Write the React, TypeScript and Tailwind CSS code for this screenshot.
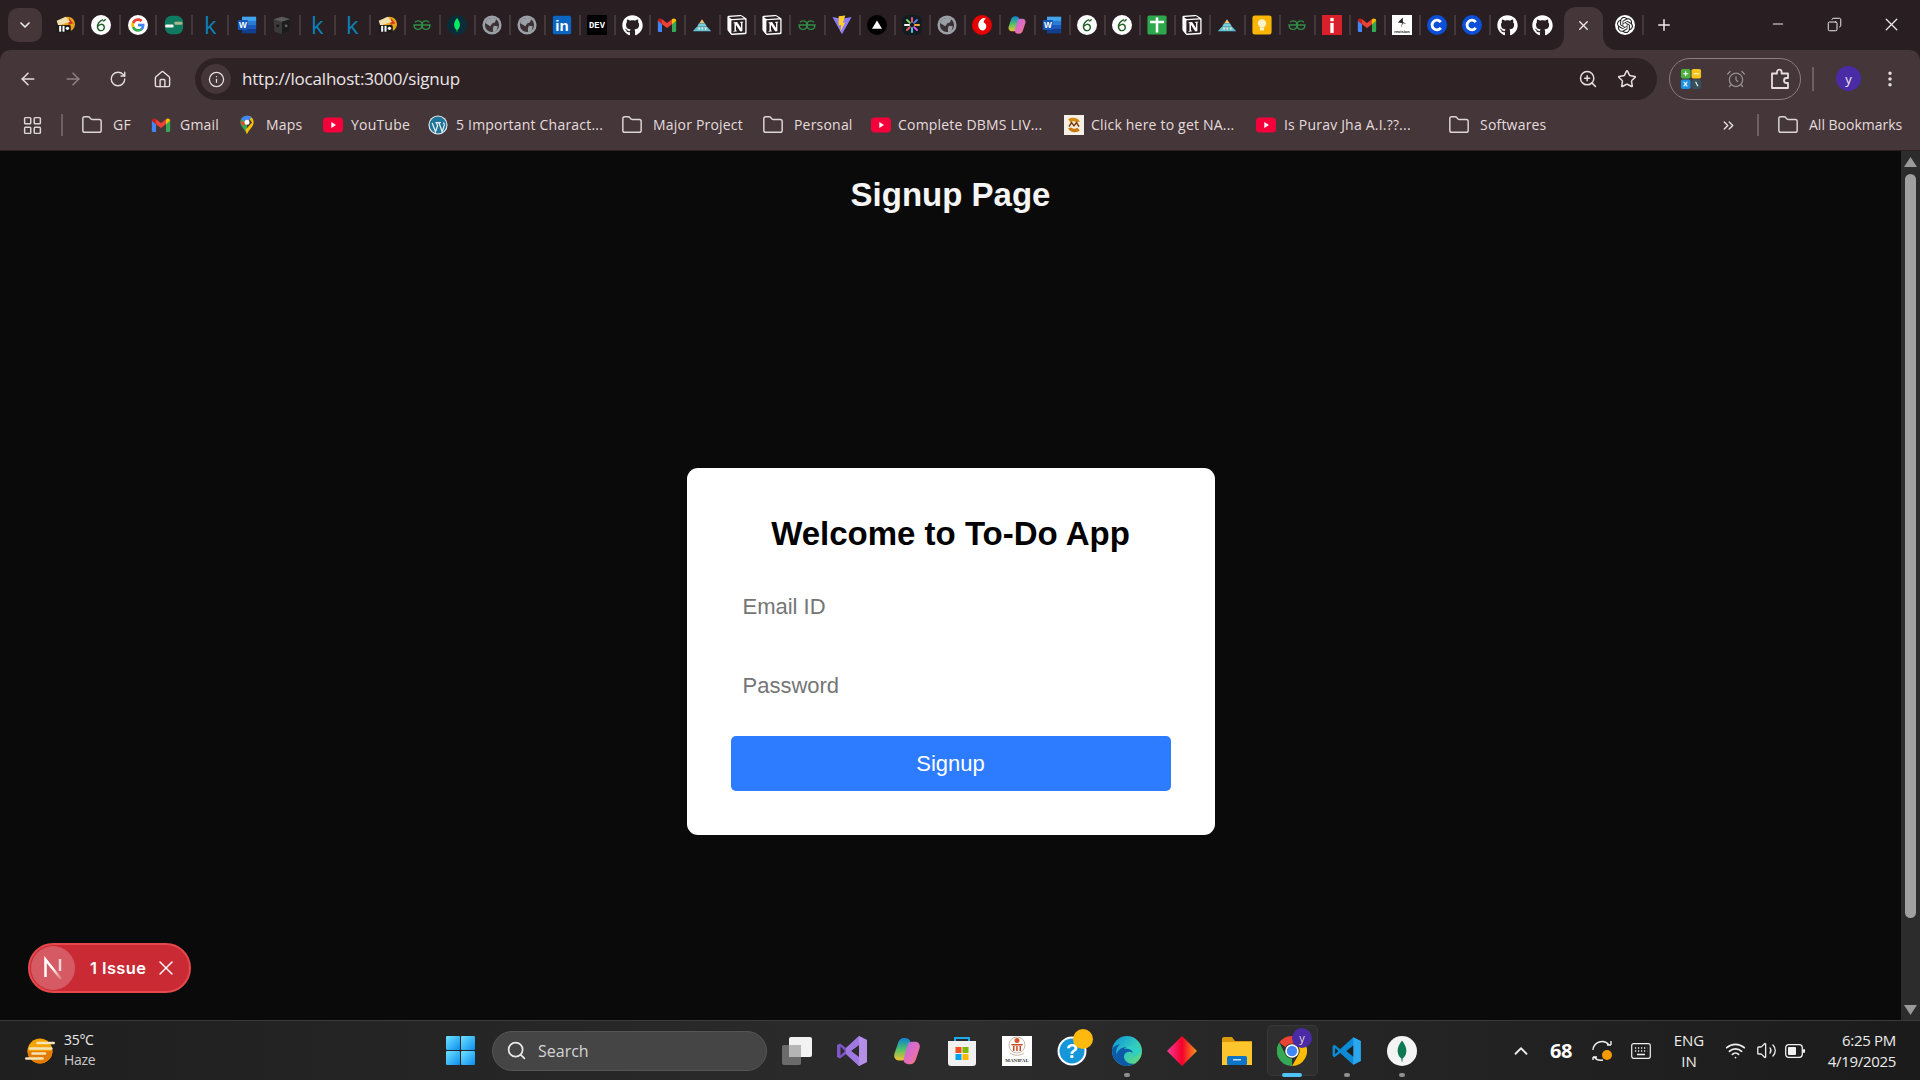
import React from "react";
import {
  ArrowLeft, ArrowRight, RotateCw, Home, Info, ZoomIn, Star, AlarmClock, LayoutGrid, Folder,
  MoreVertical, ChevronsRight, Plus, X, Minus, Copy, Wifi, Volume2, ChevronUp, Search, ChevronDown,
} from "lucide-react";
import { FaGithub } from "react-icons/fa";
import { SiNotion, SiOpenai } from "react-icons/si";

const Sv = ({ children, s = 20, v = "0 0 24 24" }: { children: React.ReactNode; s?: number; v?: string }) => (
  <svg width={s} height={s} viewBox={v} className="block shrink-0">{children}</svg>
);

const GPaths = () => (
  <>
    <path fill="#4285F4" d="M22.56 12.25c0-.78-.07-1.53-.2-2.25H12v4.26h5.92c-.26 1.37-1.04 2.53-2.21 3.31v2.77h3.57c2.08-1.92 3.28-4.74 3.28-8.09z" />
    <path fill="#34A853" d="M12 23c2.97 0 5.46-.98 7.28-2.66l-3.57-2.77c-.98.66-2.23 1.06-3.71 1.06-2.86 0-5.29-1.93-6.16-4.53H2.18v2.84C3.99 20.53 7.7 23 12 23z" />
    <path fill="#FBBC05" d="M5.84 14.09c-.22-.66-.35-1.36-.35-2.09s.13-1.43.35-2.09V7.07H2.18C1.43 8.55 1 10.22 1 12s.43 3.45 1.18 4.93l3.66-2.84z" />
    <path fill="#EA4335" d="M12 5.38c1.62 0 3.06.56 4.21 1.64l3.15-3.15C17.45 2.09 14.97 1 12 1 7.7 1 3.99 3.47 2.18 7.07l3.66 2.84c.87-2.6 3.3-4.53 6.16-4.53z" />
  </>
);
const Google = () => (
  <Sv><circle cx="12" cy="12" r="12" fill="#fff" /><g transform="translate(3.2 3.2) scale(.733)"><GPaths /></g></Sv>
);
const Gmail = ({ s = 20 }: { s?: number }) => (
  <Sv s={s}>
    <path fill="#4285F4" d="M1 7v12a1.5 1.5 0 0 0 1.5 1.5H6V10z" />
    <path fill="#34A853" d="M23 7v12a1.5 1.5 0 0 1-1.5 1.5H18V10z" />
    <path fill="#EA4335" d="M6 5v6l6 4.5 6-4.5V5l-6 4.5z" />
    <path fill="#C5221F" d="M1 7c0-2.6 3-3.6 5-2v6L1 7z" />
    <path fill="#FBBC04" d="M23 7c0-2.6-3-3.6-5-2v6l5-4z" />
  </Sv>
);
const Six = () => (
  <Sv>
    <circle cx="12" cy="12" r="12" fill="#fff" />
    <path d="M14.5 5.5C10 7.5 7.5 11 7.8 14.5c.3 3 2.4 4.5 4.6 4.2 2.5-.3 3.8-2.3 3.5-4.5-.3-2.1-2-3.3-4-3-1.2.2-2.4 1-3.2 2.2" fill="none" stroke="#1b5e20" strokeWidth="1.7" />
    <path d="M14 8c.6-2 2-3 4-3.2-.2 2-1.8 3.3-4 3.2z" fill="#1b5e20" />
  </Sv>
);
const GreenBar = () => (
  <Sv>
    <rect x="1" y="1" width="22" height="22" rx="8" fill="#0f7a5f" />
    <rect x="1.5" y="11.5" width="10" height="3.6" rx="1" fill="#f2f5ef" />
    <rect x="12.5" y="8" width="9.5" height="3.6" rx="1" fill="#a8b889" />
  </Sv>
);
const K = () => (
  <span className="text-[24px] leading-[20px] text-[#0a80b8] font-medium [font-family:'Open_Sans',sans-serif]">k</span>
);
const Word = ({ s = 20 }: { s?: number }) => (
  <Sv s={s}>
    <rect x="6" y="2" width="17" height="5.2" fill="#41a5ee" />
    <rect x="6" y="7" width="17" height="5" fill="#2b7cd3" />
    <rect x="6" y="12" width="17" height="5" fill="#185abd" />
    <rect x="6" y="17" width="17" height="5" fill="#103f91" />
    <rect x="1" y="6" width="12" height="12" rx="1" fill="#1557b8" />
    <text x="7" y="15.5" textAnchor="middle" fontSize="10" fontWeight="700" fill="#fff" fontFamily="Liberation Sans, sans-serif">W</text>
  </Sv>
);
const Cube = () => (
  <Sv>
    <path d="M2 5l10-3 10 3-1 15-9 3-9-3z" fill="#3a3a3a" />
    <path d="M2 5l10 3 10-3-10-3z" fill="#5a5a5a" />
    <path d="M12 8v15l9-3 1-15z" fill="#1c1c1c" />
    <circle cx="17" cy="13" r="1.7" fill="#666" />
    <circle cx="7" cy="13" r="1.7" fill="#151515" />
  </Sv>
);
const Scroll = () => (
  <Sv>
    <circle cx="15" cy="11" r="9" fill="#e8a317" />
    <path d="M17 4l5 6-6 2z" fill="#d33a1f" />
    <path d="M2 7l11-5 5 6-14 5z" fill="#f2dfae" />
    <rect x="2" y="12" width="17" height="9" rx="2" fill="#1c1c1c" />
    <rect x="5" y="13" width="2.4" height="7" fill="#fff" />
    <rect x="9" y="13" width="2.4" height="7" fill="#fff" />
    <rect x="13" y="14" width="4" height="4" rx="2" fill="#fff" />
  </Sv>
);
const Gfg = () => (
  <Sv>
    <path d="M12 12h9.5c0 3-2 5.2-4.8 5.2S12 15 12 12s2-5 4.7-5c1.5 0 2.8.7 3.6 1.7" fill="none" stroke="#2f8d46" strokeWidth="1.7" />
    <path d="M12 12H2.5c0 3 2 5.2 4.8 5.2S12 15 12 12s-2-5-4.7-5c-1.5 0-2.8.7-3.6 1.7" fill="none" stroke="#2f8d46" strokeWidth="1.7" />
  </Sv>
);
const Leaf = ({ fill = "#00ed64", bg = "#0a2d3a", s = 20 }: { fill?: string; bg?: string; s?: number }) => (
  <Sv s={s}>
    <circle cx="12" cy="12" r="12" fill={bg} />
    <path d="M12 3.500c2.300 3 3.700 5.800 3.500 8.800-.2 2.800-1.800 4.700-3 5.700l-.2 2.500h-.6l-.2-2.500c-1.200-1-2.800-2.900-3-5.700-.2-3 1.200-5.800 3.500-8.800z" fill={fill} />
  </Sv>
);
const Globe = () => (
  <Sv>
    <circle cx="12" cy="12" r="11.500" fill="#9aa0a6" />
    <circle cx="12" cy="12" r="8.500" fill="#3b3034" />
    <path d="M8 4.500c3-1.500 7-1 9 .5l-1.500 4-3 1-2.500 3.500L6 11l-2-1.500C4.500 7.500 6 5.500 8 4.500zM14 13l5 .5-1.500 5-4 2.500-.5-4z" fill="#9aa0a6" />
  </Sv>
);
const LinkedIn = () => (
  <Sv>
    <rect x="1" y="1" width="22" height="22" rx="2" fill="#0a66c2" />
    <text x="12" y="19" textAnchor="middle" fontSize="18" fontWeight="700" fill="#fff" fontFamily="Liberation Sans, sans-serif">in</text>
  </Sv>
);
const Dev = () => (
  <Sv>
    <rect width="24" height="24" rx="1.500" fill="#000" />
    <text x="12" y="15.500" textAnchor="middle" fontSize="10" fontWeight="700" fill="#fff" fontFamily="Liberation Mono, monospace" textLength="19" lengthAdjust="spacingAndGlyphs">DEV</text>
  </Sv>
);
const Gh = () => <FaGithub size={21} color="#fff" />;
const Pyramid = () => (
  <Sv>
    <path d="M12 5l3 4.500H9z" fill="#f3c26b" />
    <path d="M8.500 10h7l2.500 4H6z" fill="#75d0e0" />
    <path d="M5.500 14.500h13L23 19.500H1z" fill="#5cc3d9" />
    <path d="M7 15l1.500 4 1.500-4zM11 15l1.200 4 1.300-4zM15 15l1.500 4 1.500-4z" fill="#f7e7bb" />
  </Sv>
);
const Notion = () => <SiNotion size={20} color="#fff" />;
const Vite = () => (
  <Sv>
    <path d="M.5 2.500L12 23 23.500 2.500 12 4.500z" fill="#8f7bf5" />
    <path d="M8 1.500l8-1-3 9 3-.5L10 20l1-8-3 .5z" fill="#ffd028" />
  </Sv>
);
const Tri = () => (
  <Sv><circle cx="12" cy="12" r="12" fill="#000" /><path d="M12 6.500l6 10H6z" fill="#fff" /></Sv>
);
const Aster = () => (
  <Sv>
    <rect width="24" height="24" rx="7" fill="#121d20" />
    <g strokeWidth="2.200" strokeLinecap="round" fill="none">
      <path d="M12 3.500v5" stroke="#f25c8a" /><path d="M12 15.500v5" stroke="#4fd0f5" />
      <path d="M3.500 12h5" stroke="#fff" /><path d="M15.500 12h5" stroke="#f5a63c" />
      <path d="M6 6l3.500 3.500" stroke="#7ee06a" /><path d="M14.500 14.500L18 18" stroke="#e85cf2" />
      <path d="M18 6l-3.500 3.500" stroke="#5c84f2" /><path d="M9.500 14.500L6 18" stroke="#f25c5c" />
    </g>
  </Sv>
);
const Voda = () => (
  <Sv>
    <circle cx="12" cy="12" r="12" fill="#e60000" />
    <path d="M14 3.500c-3 .7-6.500 4-6.500 8.500 0 3.500 2.200 6.500 5 6.500 2.700 0 4.700-2.200 4.700-4.800 0-2.500-1.400-3.800-3.300-5 .5-2 1.200-3.500 3-4.200-1-.5-2-.8-2.900-1z" fill="#fff" />
  </Sv>
);
const CopilotArt = ({ s = 20, id }: { s?: number; id: string }) => (
  <Sv s={s}>
    <defs>
      <linearGradient id={id + "a"} x1="0" y1="0" x2="0" y2="1"><stop offset="0" stopColor="#0d7fd8" /><stop offset=".5" stopColor="#4cc06a" /><stop offset="1" stopColor="#f2c12e" /></linearGradient>
      <linearGradient id={id + "b"} x1="0" y1="0" x2="1" y2="1"><stop offset="0" stopColor="#b56be8" /><stop offset=".6" stopColor="#e66db8" /><stop offset="1" stopColor="#f5804e" /></linearGradient>
    </defs>
    <path d="M10 1.500c-3 0-4.500 1.500-5.500 5L2 14c-1 3.500 1 5.500 3.500 5.500h2.500c2 0 3-1 3.700-3l3-11C15.200 3.200 13 1.500 10 1.500z" fill={`url(#${id}a)`} />
    <path d="M14 22.500c3 0 4.500-1.500 5.500-5L22 10c1-3.500-1-5.500-3.500-5.500H16c-2 0-3 1-3.700 3l-3 11c-.5 2.300 1.700 4 4.700 4z" fill={`url(#${id}b)`} />
  </Sv>
);
const Plus2 = () => (
  <Sv>
    <rect x=".5" y=".5" width="23" height="23" rx="2" fill="#2ea84c" />
    <path d="M3.500 8.500h17M12 3v18" stroke="#fff" strokeWidth="3" />
  </Sv>
);
const Bulb = () => (
  <Sv>
    <rect x=".5" y=".5" width="23" height="23" rx="3" fill="#fbb604" />
    <circle cx="12" cy="10" r="5" fill="#fff2c9" />
    <rect x="9.500" y="15" width="5" height="3.500" rx=".8" fill="#fff2c9" />
  </Sv>
);
const RedI = () => (
  <Sv>
    <rect width="24" height="24" fill="#d9202a" />
    <rect x="10" y="9.500" width="4" height="12" fill="#fff" />
    <rect x="10" y="3.500" width="4" height="4" fill="#fff" />
  </Sv>
);
const Revision = () => (
  <Sv>
    <rect width="24" height="24" fill="#fff" />
    <path d="M13 3l-6 6 5 .5-1 6 2-5.500 4 .5-4-2z" fill="#222" />
    <text x="12" y="21" textAnchor="middle" fontSize="4.800" fontWeight="700" fill="#111" fontFamily="Liberation Sans, sans-serif">revision</text>
  </Sv>
);
const C = () => (
  <Sv>
    <circle cx="12" cy="12" r="12" fill="#0b4fd8" />
    <path d="M16.500 8.500a5.800 5.800 0 1 0 0 7" fill="none" stroke="#fff" strokeWidth="3.400" />
  </Sv>
);
const OpenAi = () => (
  <div className="w-5 h-5 rounded-full bg-white flex items-center justify-center"><SiOpenai size={16} color="#222" /></div>
);

const tabs: React.ReactNode[] = [
  <Scroll />, <Six />, <Google />, <GreenBar />, <K />, <Word />, <Cube />, <K />, <K />, <Scroll />, <Gfg />, <Leaf />,
  <Globe />, <Globe />, <LinkedIn />, <Dev />, <Gh />, <Gmail />, <Pyramid />, <Notion />, <Notion />, <Gfg />, <Vite />,
  <Tri />, <Aster />, <Globe />, <Voda />, <CopilotArt id="c1" />, <Word />, <Six />, <Six />, <Plus2 />, <Notion />,
  <Pyramid />, <Bulb />, <Gfg />, <RedI />, <Gmail />, <Revision />, <C />, <C />, <Gh />, <Gh />,
];

const TabStrip = () => (
  <div className="h-[50px] flex bg-[#291f22] shrink-0">
    <div className="ml-2 mt-2 w-[34px] h-[34px] rounded-[10px] bg-[#443639] flex items-center justify-center">
      <ChevronDown size={16} strokeWidth={2.5} color="#f0e9ea" />
    </div>
    <div className="ml-[6px] flex items-center h-full">
      {tabs.map((t, i) => (
        <div key={i} className="flex items-center">
          <div className={i < 6 ? "w-[34.3px] flex justify-center" : "w-[33px] flex justify-center"}>{t}</div>
          <div className={i === 42 ? "w-[2px] h-5" : "w-[2px] h-5 bg-[#44383b]"} />
        </div>
      ))}
    </div>
    <div className="relative ml-[3px] mt-[7px] w-[39px] h-[43px] rounded-t-[12px] bg-[#443639] flex items-center justify-center pb-[7px]">
      <X size={15} strokeWidth={2.2} color="#f0e9ea" />
      <svg width="14" height="14" viewBox="0 0 14 14" className="absolute -left-[14px] bottom-0"><path d="M14 0v14H0c8 0 14-6 14-14z" fill="#443639" /></svg>
      <svg width="14" height="14" viewBox="0 0 14 14" className="absolute -right-[14px] bottom-0"><path d="M0 0v14h14C6 14 0 8 0 0z" fill="#443639" /></svg>
    </div>
    <div className="ml-[12px] flex items-center h-full">
      <OpenAi />
      <div className="ml-[7px] w-[2px] h-5 bg-[#44383b]" />
      <div className="ml-[11px]"><Plus size={18} strokeWidth={2} color="#f0e9ea" /></div>
    </div>
    <div className="ml-auto flex h-full text-[#efe9ea]">
      <div className="w-[57px] flex items-center justify-center pb-[2px]"><Minus size={16} strokeWidth={1.6} /></div>
      <div className="w-[57px] flex items-center justify-center pb-[2px]"><Copy size={15} strokeWidth={1.6} className="-scale-x-100" /></div>
      <div className="w-[57px] flex items-center justify-center pb-[2px]"><X size={21} strokeWidth={1.4} /></div>
    </div>
  </div>
);

const Calc = () => (
  <Sv s={22}>
    <rect x="1" y="1" width="10.500" height="10.500" rx="2" fill="#4caf3f" />
    <rect x="12.500" y="1" width="10.500" height="10.500" rx="2" fill="#f6c21c" />
    <rect x="1" y="12.500" width="10.500" height="10.500" rx="2" fill="#1c8fe0" />
    <rect x="12.500" y="12.500" width="10.500" height="10.500" rx="2" fill="#37505c" />
    <path d="M3.500 6.200h5.500M6.200 3.500V9M15 6.200h5.500M4 15l4 5M8 15l-4 5M17 15l2.500 5" stroke="#fff" strokeWidth="1.200" fill="none" />
  </Sv>
);
const Ext = () => (
  <svg width="22" height="22" viewBox="0 0 22 22" fill="none" stroke="#e6dedf" strokeWidth="1.800" strokeLinejoin="round" className="block shrink-0">
    <path d="M2 5.500h5V4a2.300 2.300 0 0 1 4.600 0v1.500H18V10h-1.500a2.500 2.500 0 0 0 0 5H18v5H2z" />
  </svg>
);

const Toolbar = () => (
  <div className="h-[50px] bg-[#443639] rounded-t-[10px] shrink-0 flex pl-[5px] pt-[8px] text-[#e6dedf]">
    <div className="w-[45px] h-[42px] flex items-center justify-center"><ArrowLeft size={20} strokeWidth={1.8} /></div>
    <div className="w-[45px] h-[42px] flex items-center justify-center text-[#8f8386]"><ArrowRight size={20} strokeWidth={1.8} /></div>
    <div className="w-[45px] h-[42px] flex items-center justify-center"><RotateCw size={18} strokeWidth={1.8} /></div>
    <div className="w-[45px] h-[42px] flex items-center justify-center"><Home size={19} strokeWidth={1.8} /></div>
    <div className="ml-[10px] w-[1462px] h-[42px] rounded-full bg-[#2e2225] flex items-center pl-[6px] pr-[20px]">
      <div className="w-[30px] h-[30px] rounded-full bg-[#443639] flex items-center justify-center"><Info size={17} strokeWidth={1.8} /></div>
      <span className="ml-[11px] text-[17px] leading-[20px] text-[#ece6e7] tracking-[-0.2px] [font-family:'Open_Sans',sans-serif]">http://localhost:3000/signup</span>
      <div className="ml-auto flex items-center gap-[19px]">
        <ZoomIn size={20} strokeWidth={1.8} />
        <Star size={20} strokeWidth={1.8} />
      </div>
    </div>
    <div className="ml-[12px] w-[132px] h-[42px] rounded-full border border-[#8a7e81] flex items-center pl-[10px] gap-[24px]">
      <Calc />
      <AlarmClock size={20} strokeWidth={1.5} color="#9a8f91" />
      <Ext />
    </div>
    <div className="ml-[11px] mt-[9px] w-[2px] h-[24px] bg-[#6c6063]" />
    <div className="ml-[22px] mt-[8px] w-[25px] h-[25px] rounded-full bg-[#4a2aa5] flex items-center justify-center text-[13px] leading-[20px] text-[#efe9ea] [font-family:'Open_Sans',sans-serif]">y</div>
    <div className="ml-[19px] h-[42px] flex items-center"><MoreVertical size={20} strokeWidth={2.2} /></div>
  </div>
);

const Yt = () => (
  <Sv>
    <rect y="3" width="24" height="18" rx="4.500" fill="#f6003c" />
    <path d="M10 8.500l5.500 3.500-5.500 3.500z" fill="#fff" />
  </Sv>
);
const Maps = () => (
  <Sv>
    <path d="M12 1c-4.700 0-8 3.500-8 7.800 0 5.200 5.500 8.500 8 14.200z" fill="#34a853" />
    <path d="M12 1c4.700 0 8 3.500 8 7.800 0 5.200-5.500 8.500-8 14.200l-2-5 8-9z" fill="#fbbc04" />
    <path d="M5 5c1.500-2.500 4-4 7-4 2.200 0 4 .8 5.500 2L12 8.800z" fill="#4285f4" />
    <path d="M4.200 7.500L12 8.800 8 13c-2-1.500-3.800-3-3.800-5.500z" fill="#ea4335" />
    <circle cx="12" cy="8.800" r="3" fill="#fff" />
  </Sv>
);
const Wp = () => (
  <Sv>
    <circle cx="12" cy="12" r="11.500" fill="#e8eef2" />
    <circle cx="12" cy="12" r="10.200" fill="#21759b" />
    <path d="M5 9.500l4 10.500 2.500-7L10 9h-1M9.500 9h6M13 9l4 11 2.500-7.500c.5-2-.5-3-1-3.500" fill="none" stroke="#e8eef2" strokeWidth="1.500" />
  </Sv>
);
const Nadi = () => (
  <Sv>
    <rect width="24" height="24" fill="#f5f0e6" />
    <path d="M5 5c5-3 12-2 14 3l-4 1c-2-2-5-2-7 0z" fill="#d48a13" />
    <path d="M19 19c-5 3-12 2-14-3l4-1c2 2 5 2 7 0z" fill="#c9780d" />
    <path d="M6 14l3-5 3 4 3-4 3 5" fill="none" stroke="#7a3d05" strokeWidth="1.800" />
  </Sv>
);
const Fold = () => <Folder size={22} strokeWidth={1.6} className="shrink-0" color="#ddd5d6" />;

const marks: { icon: React.ReactNode; label: string; box: string; txt: string }[] = [
  { icon: <Fold />, label: "GF", box: "ml-[18px] gap-[10px]", txt: "w-[19px]" },
  { icon: <Gmail />, label: "Gmail", box: "ml-[19px] gap-[9px]", txt: "w-[39px]" },
  { icon: <Maps />, label: "Maps", box: "ml-[18px] gap-[9px]", txt: "w-[36px]" },
  { icon: <Yt />, label: "YouTube", box: "ml-[21px] gap-[8px]", txt: "w-[57px]" },
  { icon: <Wp />, label: "5 Important Charact...", box: "ml-[20px] gap-[8px]", txt: "w-[143px]" },
  { icon: <Fold />, label: "Major Project", box: "ml-[22px] gap-[10px]", txt: "w-[89px]" },
  { icon: <Fold />, label: "Personal", box: "ml-[20px] gap-[10px]", txt: "w-[56px]" },
  { icon: <Yt />, label: "Complete DBMS LIV...", box: "ml-[21px] gap-[7px]", txt: "w-[145px]" },
  { icon: <Nadi />, label: "Click here to get NA...", box: "ml-[21px] gap-[7px]", txt: "w-[144px]" },
  { icon: <Yt />, label: "Is Purav Jha A.I.??...", box: "ml-[21px] gap-[8px]", txt: "w-[125px]" },
  { icon: <Fold />, label: "Softwares", box: "ml-[39px] gap-[10px]", txt: "w-[66px]" },
];

const Bookmarks = () => (
  <div className="h-[51px] bg-[#443639] shrink-0 flex items-center pl-[22px] border-b border-[#2a2023] text-[14px] tracking-[0.2px] text-[#e4dcdd] [font-family:'Open_Sans',sans-serif]">
    <LayoutGrid size={21} strokeWidth={1.7} color="#ddd5d6" />
    <div className="ml-[18px] w-[2px] h-[22px] bg-[#6c6063]" />
    {marks.map((m) => (
      <div key={m.label} className={"flex items-center " + m.box}>
        {m.icon}
        <span className={"whitespace-nowrap leading-[20px] " + m.txt}>{m.label}</span>
      </div>
    ))}
    <div className="ml-[174px]"><ChevronsRight size={17} strokeWidth={2} /></div>
    <div className="ml-[20px] w-[2px] h-[22px] bg-[#6c6063]" />
    <div className="ml-[18px] flex items-center gap-[10px]"><Fold /><span className="whitespace-nowrap leading-[20px] tracking-normal">All Bookmarks</span></div>
  </div>
);

const Scrollbar = () => (
  <div className="w-[19px] bg-[#2c2c2c] shrink-0 flex flex-col items-center">
    <svg width="13" height="10" viewBox="0 0 13 10" className="mt-[6px] shrink-0"><path d="M6.500 0L13 10H0z" fill="#9a9a9a" /></svg>
    <div className="mt-[7px] w-[11px] h-[744px] rounded-full bg-[#a0a0a0] shrink-0" />
    <svg width="13" height="10" viewBox="0 0 13 10" className="mt-auto mb-[5px] shrink-0"><path d="M6.500 10L13 0H0z" fill="#9a9a9a" /></svg>
  </div>
);

const Field = ({ text }: { text: string }) => (
  <div className="h-[55px] px-3 flex items-center text-[22px] text-[#757575]">{text}</div>
);

const Page = () => (
  <div className="flex-1 min-h-0 flex bg-[#0a0a0a] relative [font-family:'Liberation_Sans',Arial,sans-serif]">
    <div className="flex-1 flex flex-col">
      <div className="h-[132px] pt-[25px] text-center shrink-0">
        <h1 className="text-[33px] leading-[38px] font-bold text-[#f5f5f5]">Signup Page</h1>
      </div>
      <div className="flex-1 flex items-center justify-center">
        <div className="w-[528px] h-[367px] bg-white rounded-[11px] px-[44px] pt-[45px]">
          <h2 className="text-[33px] leading-[42px] font-bold text-black text-center mb-[24px]">Welcome to To-Do App</h2>
          <Field text="Email ID" />
          <div className="h-[24px]" />
          <Field text="Password" />
          <button className="mt-[23px] w-full h-[55px] rounded-[5px] bg-[#2d7bff] text-white text-[22px]">Signup</button>
        </div>
      </div>
    </div>
    <Scrollbar />
    <div className="absolute left-[28px] top-[792px] w-[163px] h-[50px] rounded-full bg-[#c92a33] border-[2px] border-[#e5484d] flex items-center pl-[1px] [font-family:Inter,sans-serif]">
      <div className="w-[44px] h-[44px] rounded-full bg-[#d55a63] flex items-center justify-center shrink-0">
        <svg width="24" height="24" viewBox="0 0 24 24">
          <defs><linearGradient id="nfade" x1="0" y1="0" x2="1" y2="1"><stop offset=".45" stopColor="#fff" /><stop offset="1" stopColor="#fff" stopOpacity=".15" /></linearGradient></defs>
          <path d="M4.500 21V3.500L20 23" fill="none" stroke="url(#nfade)" strokeWidth="2.500" />
          <path d="M19 3v12" fill="none" stroke="#fff" strokeOpacity=".75" strokeWidth="2.500" />
        </svg>
      </div>
      <span className="ml-[15px] text-[16.5px] font-semibold tracking-[0.4px] text-white whitespace-nowrap">1 Issue</span>
      <X size={24} strokeWidth={1.4} color="#fff" className="ml-[7px] shrink-0" />
    </div>
  </div>
);

const Weather = () => (
  <Sv s={30}>
    <circle cx="12" cy="12" r="10" fill="#f5a300" />
    <path d="M2 12a10 10 0 0 0 20 0z" fill="#e37c00" />
    <g fill="#f5e4b8">
      <rect x="9" y="4.500" width="15" height="2" rx="1" />
      <rect x="3" y="9" width="19" height="2" rx="1" />
      <rect x="5" y="13" width="12" height="2" rx="1" />
      <rect x="0" y="17" width="15" height="2" rx="1" />
    </g>
  </Sv>
);
const Start = () => (
  <svg width="29" height="29" viewBox="0 0 29 29" className="block">
    <defs><linearGradient id="win" x1="0" y1="0" x2="1" y2="1"><stop offset="0" stopColor="#6fe3ff" /><stop offset="1" stopColor="#0b8ef0" /></linearGradient></defs>
    <rect width="14" height="14" rx="1" fill="url(#win)" /><rect x="15" width="14" height="14" rx="1" fill="url(#win)" />
    <rect y="15" width="14" height="14" rx="1" fill="url(#win)" /><rect x="15" y="15" width="14" height="14" rx="1" fill="url(#win)" />
  </svg>
);
const TaskView = () => (
  <svg width="30" height="30" viewBox="0 0 30 30" className="block">
    <rect x="0" y="9" width="19" height="20" rx="2" fill="#6b6b6b" />
    <rect x="7" y="1" width="23" height="20" rx="2" fill="#f2f2f2" />
    <rect x="7" y="9" width="12" height="12" fill="#b5b5b5" />
  </svg>
);
const VsIde = () => (
  <svg width="30" height="30" viewBox="0 0 30 30" className="block">
    <path d="M22 0l8 4v22l-8 4-13-12-6 4.500L0 21V9l3-1.500 6 4.500z" fill="#7f56c8" />
    <path d="M22 0l8 4v22l-8 4z" fill="#b58ee8" />
    <path d="M3.500 10.500v9L8 15z" fill="#2c2c2c" />
    <path d="M14 15l8-6.500v13z" fill="#2c2c2c" />
    <path d="M9 12L22 0v9l-8 6 8 6v9L9 18z" fill="#9f78e0" />
  </svg>
);
const Store = () => (
  <svg width="30" height="32" viewBox="0 0 30 32" className="block">
    <path d="M8 7V3h14v4" fill="none" stroke="#1fa9e8" strokeWidth="2" />
    <path d="M1 6h28v22a3 3 0 0 1-3 3H4a3 3 0 0 1-3-3z" fill="#f1f1f1" />
    <rect x="8.500" y="12" width="6" height="6" fill="#f25022" /><rect x="15.500" y="12" width="6" height="6" fill="#7fba00" />
    <rect x="8.500" y="19" width="6" height="6" fill="#00a4ef" /><rect x="15.500" y="19" width="6" height="6" fill="#ffb900" />
  </svg>
);
const Manipal = () => (
  <div className="w-[30px] h-[30px] bg-white flex flex-col items-center">
    <svg width="20" height="22" viewBox="0 0 20 22" className="block">
      <circle cx="10" cy="9" r="8" fill="none" stroke="#c9b9a9" strokeWidth="1" />
      <circle cx="10" cy="4.500" r="2.500" fill="#d9572b" />
      <path d="M4 8h12l-1 1.500H5zM6 10h1.500v5H6zM9.200 10h1.500v5H9.200zM12.500 10H14v5h-1.500z" fill="#c94a23" />
      <path d="M3 17c3 3 11 3 14 0" fill="none" stroke="#c9b9a9" />
    </svg>
    <span className="text-[5px] leading-[6px] font-bold text-[#333] [font-family:'Liberation_Serif',serif]">MANIPAL</span>
  </div>
);
const Help = () => (
  <div className="relative">
    <svg width="30" height="30" viewBox="0 0 30 30" className="block">
      <circle cx="15" cy="15" r="14.500" fill="#fff" />
      <circle cx="15" cy="15" r="12.500" fill="#1596d9" />
      <text x="15" y="22" textAnchor="middle" fontSize="20" fontWeight="700" fill="#fff" fontFamily="Liberation Sans, sans-serif">?</text>
    </svg>
    <div className="absolute -right-[6px] -top-[7px] w-5 h-5 rounded-full bg-[#fdb90e]" />
  </div>
);
const Edge = () => (
  <svg width="30" height="30" viewBox="0 0 30 30" className="block">
    <defs>
      <linearGradient id="edg" x1="0" y1="0" x2="1" y2="1"><stop offset="0" stopColor="#0c8fd8" /><stop offset=".5" stopColor="#30c8c0" /><stop offset="1" stopColor="#6fdc6a" /></linearGradient>
    </defs>
    <circle cx="15" cy="15" r="15" fill="url(#edg)" />
    <path d="M0 15C0 23 7 30 15 30c3 0 6-1 8-2.500-5 1-9-1-10.500-4.500-1.200-3 0-6 3-7 2-.5 4 0 5 1 .5-3-2-6-6-6-6 0-9 4-10 7-.8-3 .5-8 4-10C4 9 0 11 0 15z" fill="#0d5aa8" />
    <path d="M12 13c4-1 9 1 9 4 1 3-2 5-4 4 4 1 8-1 10-4 1-2 3-2 3-2s-1-2-3-3c-4-2-13-2-15 1z" fill="#2ed0c4" />
  </svg>
);
const Diamond = () => (
  <svg width="30" height="30" viewBox="0 0 30 30" className="block">
    <defs><linearGradient id="dia" x1="0" y1="0" x2="1" y2="0"><stop offset="0" stopColor="#f53c9e" /><stop offset=".5" stopColor="#f5002a" /><stop offset="1" stopColor="#f59a1a" /></linearGradient></defs>
    <path d="M15 0l15 15-15 15L0 15z" fill="url(#dia)" />
  </svg>
);
const Files = () => (
  <svg width="30" height="28" viewBox="0 0 30 28" className="block">
    <path d="M0 2a2 2 0 0 1 2-2h8l3 4h17v6H0z" fill="#d99a0c" />
    <path d="M0 5h30v23H0z" fill="#fcc52b" />
    <rect x="5" y="19" width="20" height="9" rx="1.500" fill="#0c75c9" />
    <rect x="11" y="22" width="8" height="1.500" fill="#bde0fa" />
  </svg>
);
const Chrome = () => (
  <div className="relative">
    <svg width="30" height="30" viewBox="0 0 30 30" className="block">
      <path d="M15 0a15 15 0 0 1 13 7.500H15a7.500 7.500 0 0 0-6.500 3.700L2.400 6.500A15 15 0 0 1 15 0z" fill="#ea4335" />
      <path d="M28 7.500A15 15 0 0 1 15 30l6.500-11.200A7.500 7.500 0 0 0 21.500 11z" fill="#fbbc04" />
      <path d="M15 30A15 15 0 0 1 2.400 6.500L8.500 18.800A7.500 7.500 0 0 0 15 22.500z" fill="#34a853" />
      <circle cx="15" cy="15" r="6" fill="#4285f4" stroke="#fff" strokeWidth="1.600" />
    </svg>
    <div className="absolute -right-[5px] -top-[8px] w-5 h-5 rounded-full bg-[#4a2aa5] flex items-center justify-center text-[11px] leading-[16px] text-[#ddd] [font-family:'Open_Sans',sans-serif]">y</div>
  </div>
);
const VsCode = () => (
  <svg width="30" height="30" viewBox="0 0 24 24" className="block">
    <path d="M17 1l6 3v16l-6 3L6.500 13.500 2 17l-1.500-1V8L2 7l4.500 3.500z" fill="#0c8ad6" />
    <path d="M17 1l6 3v16l-6 3z" fill="#2ba7ee" />
    <path d="M2.500 9.500v5L5 12z" fill="#1f1f1f" />
    <path d="M11.500 12L17 7.500v9z" fill="#1f1f1f" />
  </svg>
);

const slots: { el: React.ReactNode; dot?: string }[] = [
  { el: <TaskView /> }, { el: <VsIde /> }, { el: <CopilotArt s={30} id="c2" /> }, { el: <Store /> }, { el: <Manipal /> },
  { el: <Help /> }, { el: <Edge />, dot: "w-[6px] bg-[#8f8f8f]" }, { el: <Diamond /> }, { el: <Files /> },
  { el: <Chrome />, dot: "w-[20px] bg-[#4fc3f7]" }, { el: <VsCode />, dot: "w-[6px] bg-[#8f8f8f]" },
  { el: <Leaf s={30} bg="#f4f4f4" fill="#0f7a52" />, dot: "w-[6px] bg-[#8f8f8f]" },
];

const Taskbar = () => (
  <div className="h-[60px] shrink-0 bg-linear-to-r from-[#1f1f1f] via-[#2c2c2c] to-[#1b1b1b] border-t border-[#3a3a3a] flex items-center text-[#ececec] [font-family:'Open_Sans',sans-serif] relative">
    <div className="w-[446px] shrink-0 pl-[25px] flex items-center gap-[9px]">
      <Weather />
      <div className="text-[14px] leading-[20px] tracking-[-0.3px] -mt-[2px]">
        <div>35°C</div>
        <div className="text-[#c9c9c9]">Haze</div>
      </div>
    </div>
    <Start />
    <div className="ml-[17px] w-[275px] h-[40px] rounded-full bg-[#454545] border border-[#555] flex items-center pl-[13px] gap-[11px]">
      <Search size={21} strokeWidth={2} color="#e8e8e8" />
      <span className="text-[16px] leading-[20px] text-[#d5d5d5]">Search</span>
    </div>
    <div className="ml-[2.5px] flex h-full">
      {slots.map((s, i) => (
        <div key={i} className="w-[55px] h-full relative flex items-center justify-center">
          {i === 9 && <div className="absolute inset-x-[2px] top-[4px] bottom-[4px] rounded-[5px] bg-[#2e2e2e] border border-[#383838]" />}
          <div className="relative">{s.el}</div>
          {s.dot && <div className={"absolute bottom-[3px] left-1/2 -translate-x-1/2 h-[4px] rounded-full " + s.dot} />}
        </div>
      ))}
    </div>
    <div className="ml-auto flex items-center h-full">
      <div className="w-[40px] flex justify-center"><ChevronUp size={22} strokeWidth={2} /></div>
      <div className="w-[40px] text-center text-[20px] leading-[24px] font-bold text-white tracking-[-0.5px]">68</div>
      <div className="w-[41px] flex justify-center relative">
        <svg width="24" height="24" viewBox="0 0 24 24" fill="none" stroke="#f0f0f0" strokeWidth="1.400" className="block">
          <path d="M3 11a9 9 0 0 1 16-5M21 6V2M21 6h-4" /><path d="M13 21a9 9 0 0 1-9-3M3 18v3M3 18h4" />
          <circle cx="17" cy="16" r="5" fill="#f59a00" stroke="none" />
        </svg>
      </div>
      <div className="w-[38px] flex justify-center">
        <svg width="20" height="16" viewBox="0 0 20 16" fill="none" className="block">
          <rect x=".7" y=".7" width="18.600" height="14.600" rx="2" stroke="#f0f0f0" strokeWidth="1.200" />
          <path d="M4 5h1.200M7 5h1.200M10 5h1.200M13 5h1.200M16 5h.2M4 8h1.200M7 8h1.200M10 8h1.200M13 8h1.200M16 8h.2M6 11.500h8" stroke="#f0f0f0" strokeWidth="1.400" />
        </svg>
      </div>
      <div className="w-[58px] text-center text-[15px] leading-[21px]">
        <div>ENG</div>
        <div>IN</div>
      </div>
      <div className="w-[34px] flex justify-center"><Wifi size={21} strokeWidth={2} /></div>
      <div className="w-[28px] flex justify-center"><Volume2 size={21} strokeWidth={1.5} /></div>
      <div className="w-[30px] flex justify-center">
        <svg width="20" height="14" viewBox="0 0 20 14" className="block">
          <rect x=".7" y=".7" width="16.600" height="12.600" rx="3" fill="none" stroke="#f0f0f0" strokeWidth="1.300" />
          <rect x="3" y="3" width="8" height="8" rx="1" fill="#f0f0f0" />
          <rect x="18" y="5" width="2" height="4" rx="1" fill="#f0f0f0" />
        </svg>
      </div>
      <div className="w-[110px] pr-[24px] text-right text-[15px] leading-[21px] tracking-[-0.3px]">
        <div className="whitespace-nowrap">6:25 PM</div>
        <div className="whitespace-nowrap">4/19/2025</div>
      </div>
    </div>
  </div>
);

export default function App() {
  return (
    <div className="w-[1920px] h-[1080px] flex flex-col overflow-hidden bg-[#291f22]">
      <TabStrip />
      <Toolbar />
      <Bookmarks />
      <Page />
      <Taskbar />
    </div>
  );
}
